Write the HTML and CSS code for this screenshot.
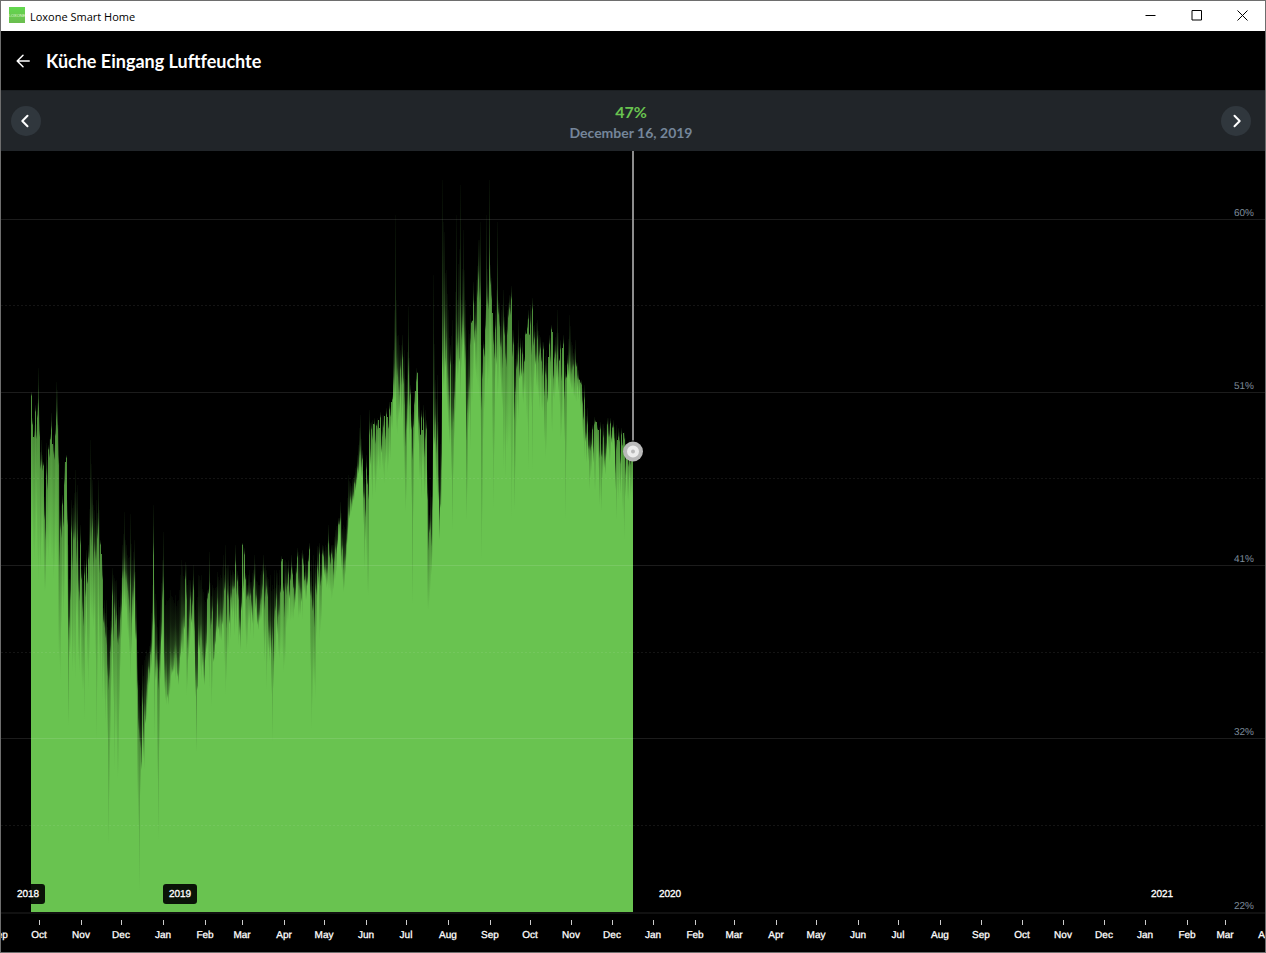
FILE: index.html
```
<!DOCTYPE html>
<html lang="en">
<head>
    <meta charset="utf-8">
    <title>Loxone Smart Home</title>
    <link rel="stylesheet" href="styles.css">
</head>
<body>
    <div class="window">
        <div class="titlebar">
            <svg class="titlebar__icon" viewBox="0 0 16 16" width="16" height="16">
                <defs>
                    <linearGradient id="iconFill" x1="0" y1="0" x2="0" y2="1">
                        <stop offset="0" stop-color="#62d84e"/>
                        <stop offset="1" stop-color="#6bbd4f"/>
                    </linearGradient>
                </defs>
                <rect width="16" height="16" fill="url(#iconFill)"/>
                <text class="titlebar__logo" x="8" y="10" text-anchor="middle">LOXONE</text>
            </svg>
            <span class="titlebar__text">Loxone Smart Home</span>
            <button class="titlebar__button" aria-label="Minimize">
                <svg viewBox="0 0 11 11" width="11" height="11"><path d="M.5 5.5H10.5"/></svg>
            </button>
            <button class="titlebar__button" aria-label="Maximize">
                <svg viewBox="0 0 11 11" width="11" height="11"><path d="M1 .5H10.5V10H1Z"/></svg>
            </button>
            <button class="titlebar__button" aria-label="Close">
                <svg viewBox="0 0 11 11" width="11" height="11"><path d="M.5 .5L10.5 10.5M10.5 .5L.5 10.5"/></svg>
            </button>
        </div>

        <header class="header">
            <button class="header__back" aria-label="Back">
                <svg viewBox="0 0 14 14" width="14" height="14"><path d="M13.2 7H1.5M7 1.2L1.2 7L7 12.8"/></svg>
            </button>
            <h1 class="header__title">Küche Eingang Luftfeuchte</h1>
        </header>

        <div class="range">
            <button class="range__button" aria-label="Previous">
                <svg viewBox="0 0 14 14" width="14" height="14"><path d="M8.5 1.8L3.3 7L8.5 12.2"/></svg>
            </button>
            <div class="range__info">
                <div class="range__value">47%</div>
                <div class="range__date">December 16, 2019</div>
            </div>
            <button class="range__button" aria-label="Next">
                <svg viewBox="0 0 14 14" width="14" height="14"><path d="M5.5 1.8L10.7 7L5.5 12.2"/></svg>
            </button>
        </div>

        <main class="chart" id="chart"></main>
    </div>
    <script src="chart.js"></script>
</body>
</html>
```
FILE: styles.css
```
* {
    box-sizing: border-box;
}

body {
    margin: 0;
    background: #000;
    font-family: Lato, sans-serif;
}

button {
    border: 0;
    padding: 0;
    background: none;
    display: flex;
    align-items: center;
    justify-content: center;
    cursor: pointer;
}

.window {
    display: flex;
    flex-direction: column;
    height: 100vh;
    border: 1px solid #6e6e6e;
    background: #000;
}

.titlebar {
    display: flex;
    align-items: center;
    height: 30px;
    padding-left: 8px;
    background: #fff;
    color: #000;
    flex: none;
}

.titlebar__icon {
    margin-right: 5px;
    margin-bottom: 2px;
}

.titlebar__logo {
    font: 4px "Liberation Sans", sans-serif;
    fill: #e4f7df;
}

.titlebar__text {
    flex: 1;
    font: 11px "Open Sans", sans-serif;
}

.titlebar__button {
    width: 46px;
    height: 30px;
}

.titlebar__button svg {
    fill: none;
    stroke: #000;
    margin-bottom: 1px;
}

.header {
    display: flex;
    align-items: center;
    height: 59px;
    padding-left: 15px;
    flex: none;
}

.header__back svg {
    fill: none;
    stroke: #fff;
    stroke-width: 1.5;
    stroke-linecap: round;
    stroke-linejoin: round;
}

.header__title {
    margin: 0 0 0 16px;
    color: #fff;
    font-size: 18px;
    font-weight: bold;
}

.range {
    display: flex;
    align-items: center;
    height: 61px;
    padding: 0 14px 0 10px;
    border-top: 1px solid #1b1f22;
    background: #212529;
    flex: none;
}

.range__button {
    width: 30px;
    height: 30px;
    border-radius: 50%;
    background: #30373d;
}

.range__button svg {
    fill: none;
    stroke: #fff;
    stroke-width: 2;
    stroke-linecap: round;
    stroke-linejoin: round;
}

.range__info {
    flex: 1;
    padding-top: 2px;
    text-align: center;
    font-weight: bold;
    line-height: 21px;
}

.range__value {
    color: #69c350;
    font-size: 16px;
}

.range__date {
    color: #75869a;
    font-size: 14px;
}

.chart {
    flex: 1;
    min-height: 0;
    overflow: hidden;
}

.chart svg {
    display: block;
}

.chart text {
    font: 10px "Liberation Sans", Arial, sans-serif;
    text-rendering: geometricPrecision;
}

.chart__grid {
    stroke: #fff;
    stroke-opacity: .11;
}

.chart__grid--half {
    stroke-dasharray: 2 2;
    stroke-opacity: .08;
}

.chart__base {
    stroke: #111;
    stroke-width: 2;
}

.chart__solid {
    fill: #69c350;
}

.chart__tick {
    stroke: #ccc;
}

.chart .chart__month,
.chart .chart__year {
    fill: #fff;
    stroke: #fff;
    stroke-width: .3;
}

.chart__badge {
    fill: #000;
    fill-opacity: .9;
}

.chart__percent {
    fill: #7d8c9b;
}

.chart__cursor {
    stroke: #8c8c8c;
    stroke-width: 2;
}
```
FILE: chart.js
```
const NS = 'http://www.w3.org/2000/svg';
const DAY = 24 * 3600 * 1000;
const DAY_WIDTH = 1.3437;
const ORIGIN = Date.UTC(2019, 0, 1);
const ORIGIN_X = 162;
const AXIS_HEIGHT = 40;
const MONTHS = ['Jan', 'Feb', 'Mar', 'Apr', 'May', 'Jun', 'Jul', 'Aug', 'Sep', 'Oct', 'Nov', 'Dec'];

// x, peak, usual level, lowest; levels count down from 60% (219) to 22% (912)
const SAMPLES = `
31 392 396 540|32 418 425 530|34 425 438 560|35 405 412 545|37 403 418 560|38 368 408 580|39 410 437 560|41 440 465 545
43 462 466 560|45 490 540 590|46 443 476 560|47 460 490 550|48 445 450 560|51 413 430 560|53 435 455 580|55 425 436 550
56 382 420 560|57 390 430 570|58 425 465 655|59 463 566 665|60 510 530 680|62 495 505 600|64 462 485 600|66 455 458 580|67 500 525 620
68 545 640 725|70 560 600 650|71 500 533 640|73 505 540 660|75 470 538 680|77 485 542 620|78 540 592 660|80 525 545 640
82 570 612 690|84 560 576 720|86 550 568 610|88 545 560 690|90 440 540 610|92 480 530 620|94 510 552 620|95 520 560 660|96 500 560 740
98 480 530 620|100 540 545 680|102 560 580 700|104 600 628 700|106 600 645 700|108 630 690 845|109 630 680 800|111 600 635 690|112 568 596 660
114 578 610 770|116 580 620 740|118 600 645 775|120 590 620 670|122 545 578 600|124 512 572 600|126 545 582 610|128 558 600 640
130 514 585 680|132 560 600 620|134 540 582 605|136 600 640 700|137 650 690 800|138 680 730 830|139 685 742 892|141 690 762 770|142 665 705 750
144 660 716 770|146 650 700 720|148 652 670 690|150 640 655 675|152 585 630 650|153 505 555 630|154 580 625 740|156 600 660 680|158 640 690 840
160 600 655 680|162 560 600 640|163 532 590 660|164 590 670 690|166 600 680 705|168 600 690 705|170 590 665 690|173 600 665 672|175 595 655 680
178 600 675 685|181 560 640 650|185 562 580 645|186 565 600 695|188 580 640 660|190 580 600 640|193 565 590 640|196 600 690 752|198 575 640 650
201 575 640 680|204 600 675 685|207 590 600 650|209 552 590 690|212 585 612 690|214 590 650 660|217 572 605 635|220 575 620 640
223 555 610 630|225 545 590 695|228 565 600 650|230 570 600 640|232 570 590 620|235 545 565 620|238 575 600 645|240 590 630 650
242 543 545 640|244 548 555 600|246 575 600 650|249 570 600 620|253 570 590 640|254 555 580 625|258 585 620 630|262 565 590 610
263 555 575 640|266 570 590 690|270 575 635 650|272 585 640 742|274 570 620 665|276 570 600 630|279 570 615 660|281 556 562 650|285 560 590 660
288 560 575 620|291 555 570 620|294 575 600 610|297 548 558 600|299 555 590 615|302 550 560 620|305 560 580 600|309 543 550 590
311 560 600 730|313 555 610 680|315 560 590 700|317 546 570 600|319 543 555 640|322 545 555 590|325 545 570 580|328 525 545 590|331 545 555 600
333 545 575 590|335 530 550 580|338 518 525 540|340 502 522 560|343 525 570 592|346 520 545 560|348 475 515 530|350 483 500 515|354 475 484 500
357 455 470 480|360 415 455 470|362 450 460 480|364 470 500 570|366 455 470 560|368 475 500 595|369 410 435 480|372 420 440 500|374 418 425 480
377 418 430 470|380 412 418 470|383 415 428 475|386 408 415 460|389 402 410 455|392 395 400 430|393 350 385 400|394 310 380 400|395 215 370 400
396 300 375 430|398 335 390 420|400 350 370 400|402 335 360 410|404 350 405 480|406 380 430 500|408 307 375 430|410 385 395 430|412 410 460 605
414 390 405 450|416 368 382 420|417 372 373 400|419 400 430 480|421 410 418 500|423 405 420 470|425 410 440 490|426 420 430 480|427 470 500 610
428 490 550 610|430 490 530 590|432 450 510 560|433 275 420 450|435 380 425 470|437 375 440 500|439 470 520 540|441 400 470 510
442 180 350 370|443 222 360 390|444 232 330 385|446 270 350 400|448 310 395 430|450 345 365 440|452 320 430 530|454 360 400 440
456 215 345 370|457 300 350 380|460 185 330 400|461 300 340 370|463 230 325 345|464 270 345 370|465 300 360 410|466 330 440 520|468 330 400 430|470 315 345 450
473 282 305 380|476 280 335 380|478 240 280 390|480 222 300 430|481 345 410 560|483 340 350 440|485 310 330 380|486 215 310 370|488 280 310 380
489 180 270 380|490 265 285 350|491 278 300 370|493 320 345 510|495 310 330 380|497 222 310 400|498 300 315 390|501 310 350 400|503 290 330 470|505 330 360 480
507 310 335 450|509 295 310 440|511 286 300 520|513 330 345 420|514 345 420 510|516 350 370 430|518 320 355 420|520 338 350 380|522 340 355 400
525 330 335 400|528 310 320 470|530 305 325 400|532 298 310 470|534 325 340 380|537 320 340 390|540 337 350 400|543 342 350 410|546 350 380 450
549 335 345 400|551 325 330 430|554 345 360 400|557 310 355 380|560 340 350 440|563 335 345 390|565 365 380 520|567 355 365 380|569 315 365 380
572 345 370 390|575 340 365 400|578 370 380 400|581 380 385 410|584 385 400 460|587 408 425 450|589 430 450 490|592 425 430 450|594 417 425 490
597 425 430 455|600 422 430 500|603 424 438 470|605 430 460 475|607 418 425 440|610 418 424 460|613 420 428 440|616 425 450 520|618 428 438 500
621 428 435 480|624 432 440 540|627 445 452 500|629 440 460 480|632 440 450 500`;

const rows = SAMPLES.trim().split(/[|\n]/).map(row => row.trim().split(' ').map(Number));

let seed = 7;
const random = () => {
  seed = (seed * 16807) % 2147483647;
  return seed / 2147483647;
};

// one entry per pixel column
const columns = [];
for (let i = 0; i < rows.length; i++) {
  const from = rows[i];
  const to = rows[i + 1] || [633];
  for (let x = from[0]; x < to[0]; x++) {
    const first = x === from[0];
    const t = (x - from[0]) / (to[0] - from[0]);
    const mix = n => first ? from[n] : from[n] + ((to[n] - from[n]) * t);
    const spread = first ? 0 : Math.min(60, mix(3) - mix(2));
    const mid = mix(2) + (random() - .2) * spread * .8;
    columns.push({
      x,
      top: Math.min(mix(1) + random() * spread * .5, mid),
      mid,
      low: Math.max(mid + 4, mix(3) + (random() - .6) * spread)
    });
  }
}

const add = (parent, name, attrs, text) => {
  const el = document.createElementNS(NS, name);
  Object.keys(attrs).forEach(key => el.setAttribute(key, attrs[key]));
  if (text) el.textContent = text;
  parent.appendChild(el);
  return el;
};

const gradient = (defs, id, stops) => {
  const el = add(defs, 'linearGradient', { id, x1: 0, y1: 0, x2: 0, y2: 1 });
  stops.forEach(([offset, opacity]) => add(el, 'stop', {
    offset, 'stop-color': '#69c350', 'stop-opacity': opacity
  }));
};

const dateX = time => ORIGIN_X + (time - ORIGIN) / DAY * DAY_WIDTH;

const draw = () => {
  const chart = document.getElementById('chart');
  chart.innerHTML = '';
  const width = chart.clientWidth;
  const height = chart.clientHeight;
  const bottom = height - AXIS_HEIGHT;
  const y = level => Math.floor(bottom - (912 - level) * bottom / 761);
  const svg = add(chart, 'svg', { width, height });

  const defs = add(svg, 'defs', {});
  gradient(defs, 'fadeTop', [[0, .04], [.4, .15], [.75, .35], [1, .7]]);
  gradient(defs, 'fadeLow', [[0, .72], [.4, .84], [1, 1]]);

  const area = add(svg, 'g', { 'shape-rendering': 'crispEdges' });
  columns.forEach(({ x, top, mid, low }) => {
    const [a, b, c] = [y(top), y(mid), y(low)];
    add(area, 'rect', { x: x - 1, y: a, width: 1, height: b - a, fill: 'url(#fadeTop)' });
    add(area, 'rect', { x: x - 1, y: b, width: 1, height: c - b, fill: 'url(#fadeLow)' });
    add(area, 'rect', { x: x - 1, y: c, width: 1, height: bottom - c, class: 'chart__solid' });
  });

  ['60%', '51%', '41%', '32%', '22%'].forEach((label, i) => {
    const lineY = y(219 + i * 173.25) + .5;
    if (i < 4) {
      add(svg, 'line', { class: 'chart__grid', x1: 0, x2: width, y1: lineY, y2: lineY });
      const halfY = y(219 + (i + .5) * 173.25) + .5;
      add(svg, 'line', { class: 'chart__grid chart__grid--half', x1: 0, x2: width, y1: halfY, y2: halfY });
    } else {
      add(svg, 'line', { class: 'chart__base', x1: 0, x2: width, y1: bottom + 1, y2: bottom + 1 });
    }
    add(svg, 'text', { class: 'chart__percent', x: width - 11, y: lineY - 3.5, 'text-anchor': 'end' }, label);
  });

  for (let m = 0; ; m++) {
    const time = Date.UTC(2018, 8 + m, 1);
    const x = Math.round(dateX(time));
    if (x > width + 20) break;
    const date = new Date(time);
    add(svg, 'line', { class: 'chart__tick', x1: x + .5, x2: x + .5, y1: bottom + 8, y2: bottom + 13 });
    add(svg, 'text', { class: 'chart__month', x, y: bottom + 26, 'text-anchor': 'middle' }, MONTHS[date.getUTCMonth()]);
    if (m === 0 || date.getUTCMonth() === 0) {
      const left = Math.max(x, 10);
      add(svg, 'rect', { class: 'chart__badge', x: left, y: bottom - 28, width: 34, height: 20, rx: 3 });
      add(svg, 'text', { class: 'chart__year', x: left + 17, y: bottom - 15, 'text-anchor': 'middle' }, String(date.getUTCFullYear()));
    }
  }

  // selected point
  const cursorX = 632;
  const cursorY = y(451) + .5;
  add(svg, 'line', { class: 'chart__cursor', x1: cursorX, x2: cursorX, y1: 0, y2: cursorY - 11 });
  add(svg, 'circle', { cx: cursorX, cy: cursorY, r: 10, fill: '#b9b9b9' });
  add(svg, 'circle', { cx: cursorX, cy: cursorY, r: 4, fill: '#b9b9b9', stroke: '#ececec', 'stroke-width': 4 });
};

draw();
window.addEventListener('resize', draw);
```
